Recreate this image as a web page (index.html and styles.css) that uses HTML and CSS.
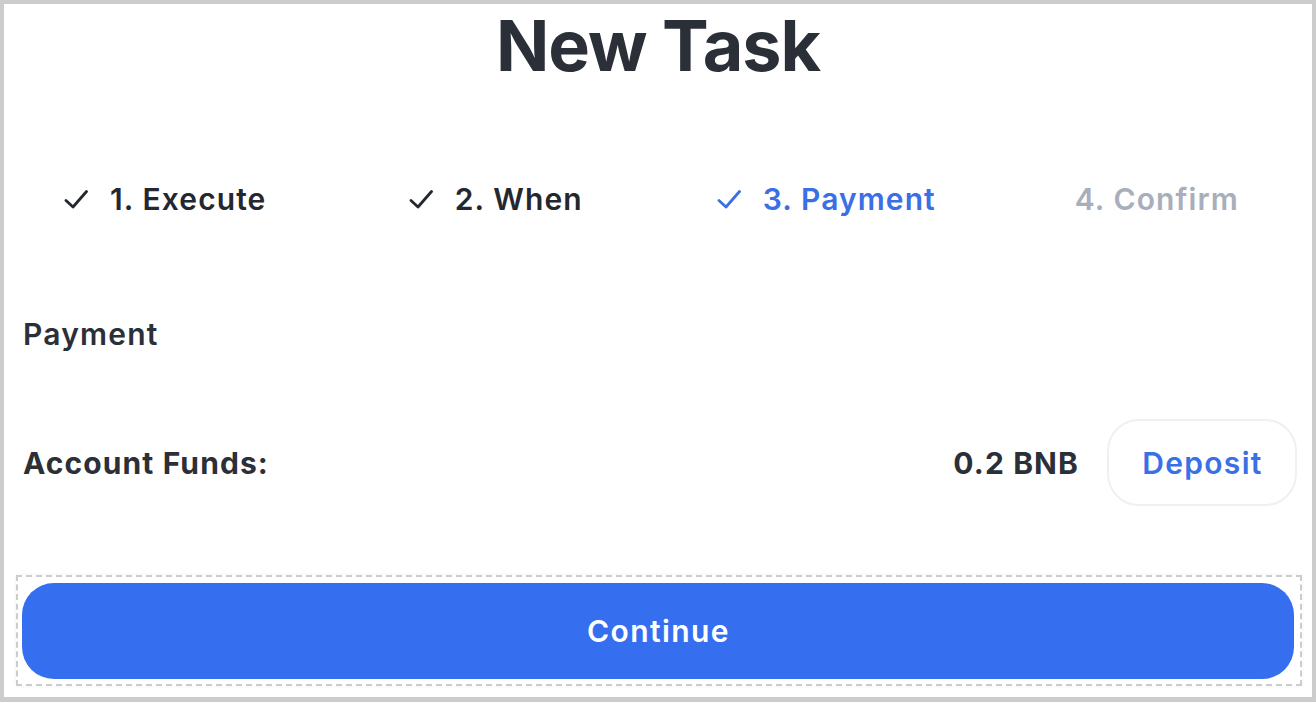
FILE: index.html
```html
<!DOCTYPE html>
<html lang="en">
<head>
<meta charset="utf-8">
<title>New Task</title>
<link rel="stylesheet" href="styles.css">
</head>
<body>
<div class="frame">
  <h1 class="title">New Task</h1>
  <div class="steps">
    <div class="step done">
      <svg class="check" viewBox="0 0 24 20" width="24" height="20"><path d="M2 11.5 L9 18 L22.5 2.5" fill="none" stroke="currentColor" stroke-width="2.8" stroke-linecap="round" stroke-linejoin="round"/></svg>
      <span>1. Execute</span>
    </div>
    <div class="step done">
      <svg class="check" viewBox="0 0 24 20" width="24" height="20"><path d="M2 11.5 L9 18 L22.5 2.5" fill="none" stroke="currentColor" stroke-width="2.8" stroke-linecap="round" stroke-linejoin="round"/></svg>
      <span>2. When</span>
    </div>
    <div class="step active">
      <svg class="check" viewBox="0 0 24 20" width="24" height="20"><path d="M2 11.5 L9 18 L22.5 2.5" fill="none" stroke="currentColor" stroke-width="2.8" stroke-linecap="round" stroke-linejoin="round"/></svg>
      <span>3. Payment</span>
    </div>
    <div class="step pending">
      <span>4. Confirm</span>
    </div>
  </div>
  <h2 class="section">Payment</h2>
  <div class="funds">
    <span class="funds-label">Account Funds:</span>
    <span class="funds-value">0.2 BNB</span>
    <button class="deposit">Deposit</button>
  </div>
  <div class="continue-wrap">
    <button class="continue">Continue</button>
  </div>
</div>
</body>
</html>
```
FILE: styles.css
```css
html, body {
  margin: 0;
  padding: 0;
  background: #ffffff;
}
.frame {
  width: 1316px;
  height: 702px;
  box-sizing: border-box;
  border: 4px solid #cccccc;
  border-bottom-width: 5px;
  padding: 0 18px;
  font-family: Inter, "Noto Sans", sans-serif;
  color: #2b3038;
  overflow: hidden;
}
.title {
  margin: 0;
  padding-top: 6px;
  font-size: 70px;
  line-height: 72px;
  font-weight: 700;
  text-align: center;
  letter-spacing: -1px;
}
.steps {
  margin: 99px -28px 0 -22px;
  display: grid;
  grid-template-columns: repeat(4, 1fr);
  justify-items: center;
  font-size: 30px;
  line-height: 36px;
  font-weight: 600;
  letter-spacing: 1.1px;
}
.step {
  display: flex;
  align-items: center;
}
.check {
  width: 24px;
  height: 20px;
  margin-right: 22px;
}
.step.done { color: #24282e; }
.step.active { color: #3a6fe6; }
.step.pending { color: #a8aebb; }
.section {
  margin: 99px 0 0 1px;
  font-size: 30px;
  line-height: 36px;
  font-weight: 600;
  letter-spacing: 1.2px;
}
.funds {
  margin: 67px -3px 0 1px;
  display: flex;
  align-items: center;
  font-size: 30px;
  font-weight: 700;
  letter-spacing: 1.1px;
}
.funds-label { flex: 1; }
.funds-value { margin-right: 28px; }
.deposit {
  height: 87px;
  width: 190px;
  box-sizing: border-box;
  border: 2px solid #eef0f5;
  border-radius: 32px;
  background: #ffffff;
  color: #3a6fe6;
  font-family: inherit;
  font-size: 30px;
  font-weight: 600;
  letter-spacing: 1.3px;
  padding: 0 0 0 1px;
}
.continue-wrap {
  margin: 69px -8px 0 -6px;
  border: 2px dashed #cccccc;
  padding: 6px 6px 5px 4px;
  box-shadow: 0 0 4px rgba(0, 0, 0, 0.06);
}
.continue {
  display: block;
  width: 100%;
  height: 96px;
  border: none;
  border-radius: 32px;
  background: #356ff0;
  color: #ffffff;
  font-family: inherit;
  font-size: 30px;
  font-weight: 600;
  letter-spacing: 1.4px;
  padding: 0 0 0 1px;
}
```
